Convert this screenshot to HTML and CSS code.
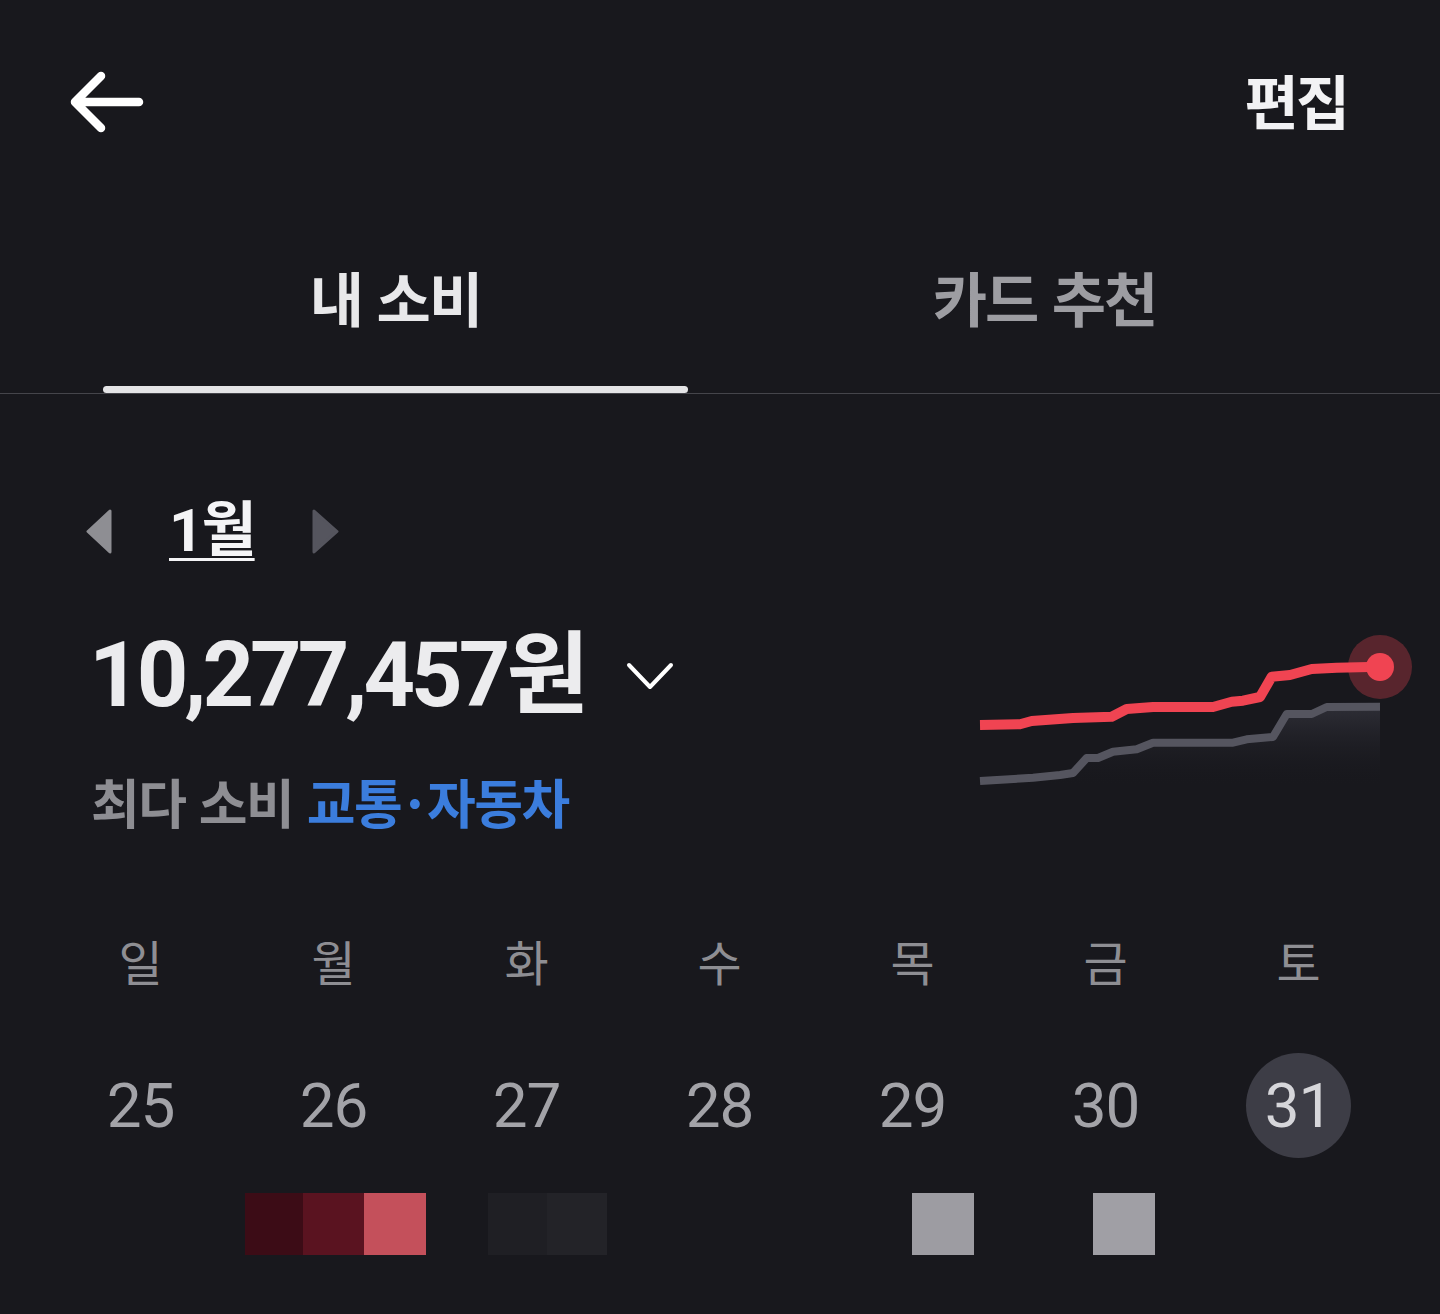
FILE: index.html
```html
<!DOCTYPE html>
<html lang="ko">
<head>
<meta charset="utf-8">
<title>내 소비</title>
<link rel="stylesheet" href="styles.css">
</head>
<body>
<div class="app">
  <header class="topbar">
    <svg class="back" width="84" height="70" viewBox="0 0 84 70" aria-label="뒤로">
      <path d="M35 11 L9 37 L35 63 M9 37 H73" fill="none" stroke="#ffffff" stroke-width="8.5" stroke-linecap="round" stroke-linejoin="round"/>
    </svg>
    <span class="edit">편집</span>
  </header>

  <nav class="tabs">
    <div class="tab active"><span class="tab-label">내 소비</span><span class="tab-bar"></span></div>
    <div class="tab"><span class="tab-label">카드 추천</span><span class="tab-bar"></span></div>
  </nav>

  <section class="month-row">
    <svg class="tri" width="26" height="45" viewBox="0 0 26 45"><polygon points="24,2 24,43 2,22.5" fill="#8e8e93" stroke="#8e8e93" stroke-width="3" stroke-linejoin="round"/></svg>
    <span class="month">1월</span>
    <svg class="tri" width="27" height="45" viewBox="0 0 27 45"><polygon points="2,2 2,43 25,22.5" fill="#55555e" stroke="#55555e" stroke-width="3" stroke-linejoin="round"/></svg>
  </section>

  <section class="summary">
    <div class="summary-left">
      <div class="amount-row">
        <span class="amount">10,277,457원</span>
        <svg class="caret" width="50" height="30" viewBox="0 0 50 30"><path d="M4 4 L25 26 L46 4" fill="none" stroke="#ffffff" stroke-width="4" stroke-linecap="round" stroke-linejoin="round"/></svg>
      </div>
      <div class="top-cat"><span class="muted">최다 소비</span> <span class="accent">교통<span class="dot">·</span>자동차</span></div>
    </div>
    <svg class="chart" width="440" height="160" viewBox="0 0 440 160">
      <defs>
        <linearGradient id="fillg" x1="0" y1="0" x2="0" y2="1">
          <stop offset="0" stop-color="#2e2e36" stop-opacity="1"/>
          <stop offset="1" stop-color="#18181d" stop-opacity="0"/>
        </linearGradient>
      </defs>
      <polygon fill="url(#fillg)" points="5,150 58,146.7 85,144 98,142 111.7,127 123,127 138,120.7 161.7,118.3 178,111.7 258,111.7 271.7,108.3 298,106 311.7,83 336.7,83 351.7,76 405,75.7 405,156 5,156"/>
      <polyline fill="none" stroke="#55555f" stroke-width="8" stroke-linejoin="round" points="5,150 58,146.7 85,144 98,142 111.7,127 123,127 138,120.7 161.7,118.3 178,111.7 258,111.7 271.7,108.3 298,106 311.7,83 336.7,83 351.7,76 405,75.7"/>
      <polyline fill="none" stroke="#f04452" stroke-width="10" stroke-linejoin="round" points="5,94 45,93.3 56.7,90 98,87 136.7,85.7 151.7,78 178,76 238,76 256.7,70.7 268,69.7 285,66 296.7,45.7 315,44 336.7,38 361.7,36.7 405,35.7"/>
      <circle cx="405" cy="36" r="32" fill="#f04452" fill-opacity="0.3"/>
      <circle cx="405" cy="36" r="14" fill="#f04452"/>
    </svg>
  </section>

  <section class="week">
    <div class="cell wd">일</div>
    <div class="cell wd">월</div>
    <div class="cell wd">화</div>
    <div class="cell wd">수</div>
    <div class="cell wd">목</div>
    <div class="cell wd">금</div>
    <div class="cell wd">토</div>
  </section>

  <section class="dates">
    <div class="cell"><span class="day">25</span></div>
    <div class="cell"><span class="day">26</span></div>
    <div class="cell"><span class="day">27</span></div>
    <div class="cell"><span class="day">28</span></div>
    <div class="cell"><span class="day">29</span></div>
    <div class="cell"><span class="day">30</span></div>
    <div class="cell"><span class="day today">31</span></div>
  </section>

  <section class="heat">
    <span class="sq s1"></span>
    <span class="sq s2"></span>
    <span class="sq s3"></span>
    <span class="sq s4"></span>
    <span class="sq s5"></span>
    <span class="sq s6"></span>
    <span class="sq s7"></span>
  </section>
</div>
</body>
</html>
```
FILE: styles.css
```css
* { box-sizing: border-box; }
html, body {
  margin: 0;
  padding: 0;
  background: #18181d;
}
body {
  font-family: Roboto, "Noto Sans CJK KR", "Noto Sans", sans-serif;
  color: #ececee;
  width: 1440px;
  height: 1314px;
  overflow: hidden;
}
.app {
  display: flex;
  flex-direction: column;
}

/* header */
.topbar {
  height: 200px;
  display: flex;
  align-items: center;
  justify-content: space-between;
  padding: 0 93px 0 66px;
}
.back { display: block; }
.edit {
  font-family: "Noto Sans CJK KR", sans-serif;
  font-weight: 700;
  font-size: 59px;
  line-height: 60px;
  letter-spacing: -3px;
  color: #f2f2f4;
}

/* tabs */
.tabs {
  display: flex;
  gap: 64px;
  padding: 0 103px;
  border-bottom: 1px solid #45454b;
}
.tab {
  flex: 1;
  display: flex;
  flex-direction: column;
  align-items: center;
  padding-top: 67px;
  height: 193px;
}
.tab-label {
  font-family: "Noto Sans CJK KR", sans-serif;
  font-weight: 700;
  font-size: 59px;
  line-height: 60px;
  letter-spacing: -2px;
  color: #9d9da2;
}
.tab-bar {
  margin-top: 59px;
  height: 7px;
  width: 100%;
  border-radius: 4px;
  background: transparent;
}
.tab.active .tab-label { color: #e8e8ea; }
.tab.active .tab-bar { background: #e4e4e6; }

/* month */
.month-row {
  margin-top: 102px;
  height: 70px;
  display: flex;
  align-items: center;
  gap: 57px;
  padding-left: 86px;
}
.tri { display: block; }
.month {
  font-family: Roboto, "Noto Sans CJK KR", sans-serif;
  font-weight: 700;
  font-size: 60px;
  line-height: 70px;
  letter-spacing: -2px;
  color: #f4f4f6;
  text-decoration: underline;
  text-decoration-thickness: 3px;
  text-underline-offset: 7px;
}

/* summary */
.summary {
  margin-top: 65px;
  display: flex;
  align-items: flex-start;
  padding: 0 25px 0 89px;
}
.summary-left {
  display: flex;
  flex-direction: column;
}
.amount-row {
  display: flex;
  align-items: center;
  height: 90px;
}
.amount {
  font-family: Roboto, "Noto Sans CJK KR", sans-serif;
  font-weight: 700;
  font-size: 90px;
  line-height: 90px;
  letter-spacing: -4px;
  color: #ececee;
}
.caret {
  display: block;
  margin-left: 40px;
}
.top-cat {
  margin-top: 50px;
  margin-left: 2px;
  height: 60px;
  font-family: "Noto Sans CJK KR", sans-serif;
  font-weight: 700;
  font-size: 53px;
  line-height: 60px;
  letter-spacing: -1.5px;
}
.muted { color: #8e8e93; }
.accent { color: #3b7ddd; }
.dot { padding: 0 5px; }
.chart {
  display: block;
  margin-left: auto;
}

/* calendar */
.week, .dates {
  display: grid;
  grid-template-columns: repeat(7, 193px);
  padding-left: 44px;
}
.week {
  margin-top: 99px;
  height: 60px;
}
.cell {
  display: flex;
  align-items: center;
  justify-content: center;
}
.wd {
  font-family: "Noto Sans CJK KR", sans-serif;
  font-weight: 400;
  font-size: 48px;
  line-height: 60px;
  color: #8e8e93;
}
.dates {
  margin-top: 63px;
  height: 105px;
}
.day {
  width: 105px;
  height: 105px;
  border-radius: 50%;
  display: flex;
  align-items: center;
  justify-content: center;
  font-family: Roboto, sans-serif;
  font-weight: 400;
  font-size: 62px;
  letter-spacing: -1px;
  color: #a3a3a8;
}
.day.today {
  background: #3d3d46;
  color: #d6d6da;
}

/* heat squares */
.heat {
  margin-top: 35px;
  height: 62px;
  display: flex;
  padding-left: 245px;
}
.sq { display: block; height: 62px; }
.s1 { width: 58px; background: #3c0c16; }
.s2 { width: 61px; background: #5a1320; }
.s3 { width: 62px; background: #c4505b; }
.s4 { width: 59px; margin-left: 62px; background: #1f1f24; }
.s5 { width: 60px; background: #232328; }
.s6 { width: 62px; margin-left: 305px; background: #9d9ca2; }
.s7 { width: 62px; margin-left: 119px; background: #a09fa5; }
```
